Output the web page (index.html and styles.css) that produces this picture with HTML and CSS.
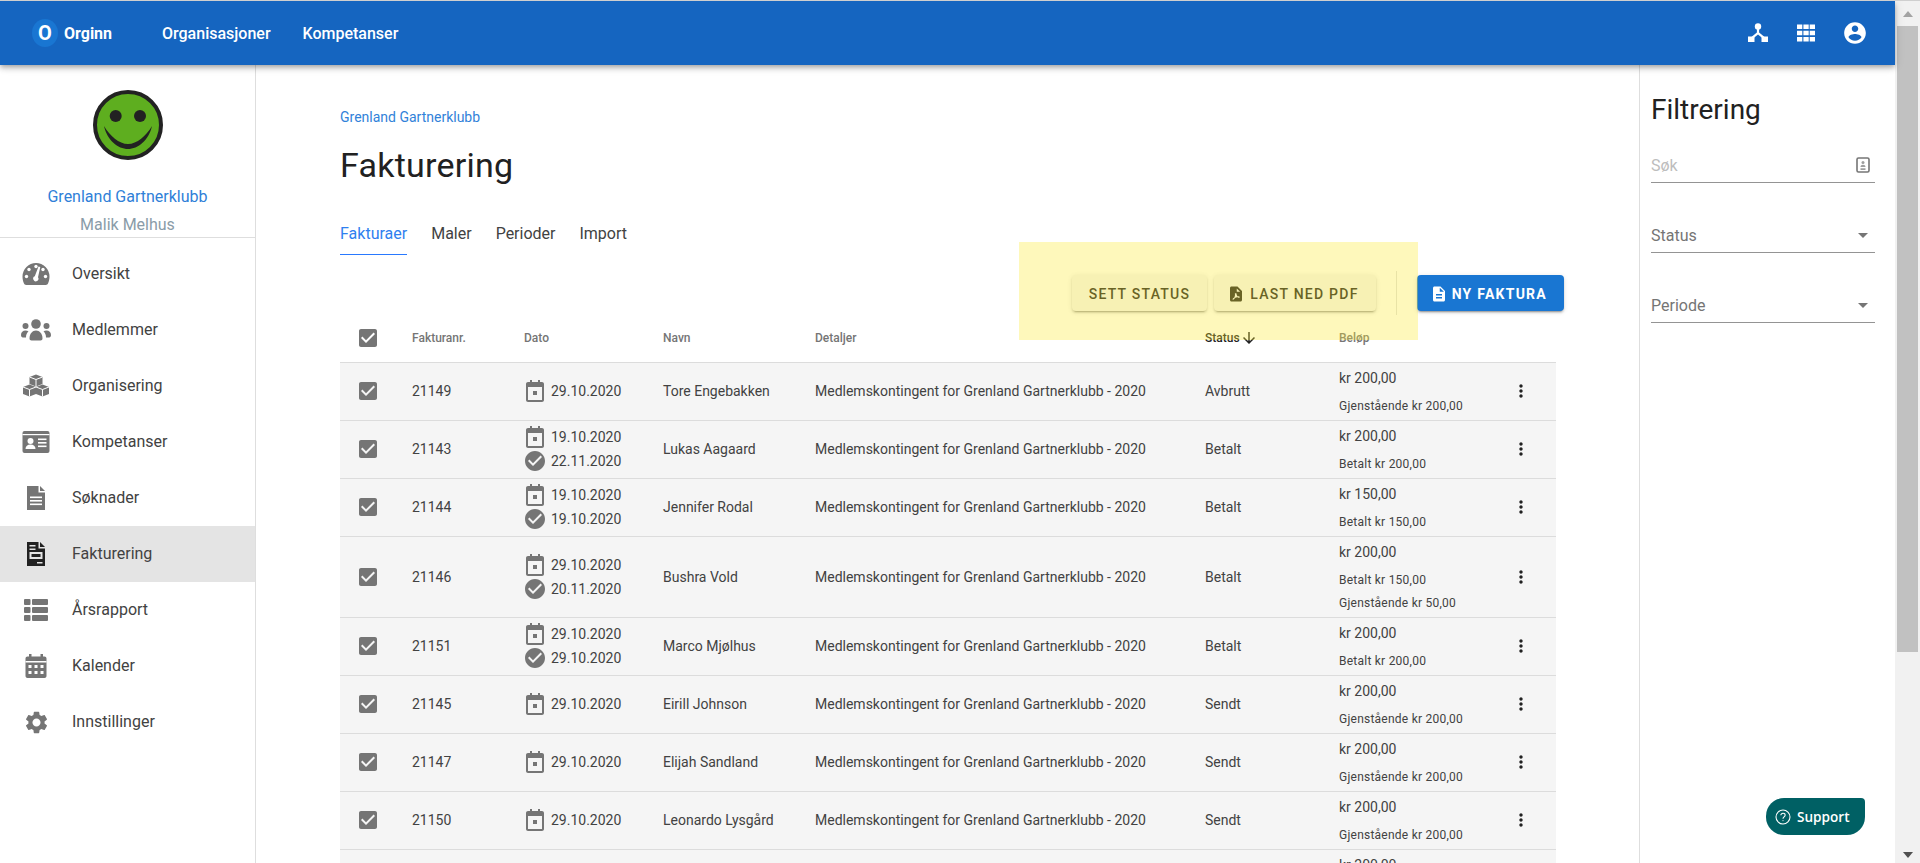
FILE: index.html
```html
<!DOCTYPE html>
<html lang="no">
<head>
<meta charset="utf-8">
<title>Fakturering</title>
<link rel="stylesheet" href="styles.css">
</head>
<body>
<svg class="sprite" aria-hidden="true">
  <symbol id="i-cal" viewBox="0 0 24 24"><path d="M7 1h2v2h6V1h2v2h2c1.100 0 2 .9 2 2v16c0 1.100-.9 2-2 2H5c-1.100 0-2-.9-2-2V5c0-1.100.9-2 2-2h2zM5 8v13h14V8zm5 4h4v4h-4z" fill-rule="evenodd"/></symbol>
  <symbol id="i-ok" viewBox="0 0 24 24"><path d="M12 2C6.480 2 2 6.480 2 12s4.480 10 10 10 10-4.480 10-10S17.520 2 12 2zm-2 15l-5-5 1.410-1.410L10 14.170l7.590-7.590L19 8l-9 9z"/></symbol>
  <symbol id="i-check" viewBox="0 0 24 24"><path d="M19 3H5c-1.110 0-2 .9-2 2v14c0 1.100.890 2 2 2h14c1.110 0 2-.9 2-2V5c0-1.100-.890-2-2-2zm-9 14l-5-5 1.410-1.410L10 14.170l7.590-7.590L19 8l-9 9z"/></symbol>
  <symbol id="i-more" viewBox="0 0 24 24"><path d="M12 8c1.100 0 2-.9 2-2s-.9-2-2-2-2 .9-2 2 .9 2 2 2zm0 2c-1.100 0-2 .9-2 2s.9 2 2 2 2-.9 2-2-.9-2-2-2zm0 6c-1.100 0-2 .9-2 2s.9 2 2 2 2-.9 2-2-.9-2-2-2z"/></symbol>
  <symbol id="i-drop" viewBox="0 0 24 24"><path d="M7 10l5 5 5-5z"/></symbol>
  <symbol id="i-doc" viewBox="0 0 24 24"><path d="M14 2H6c-1.100 0-1.990.9-1.990 2L4 20c0 1.100.890 2 1.990 2H18c1.100 0 2-.9 2-2V8l-6-6zm2 16H8v-2h8v2zm0-4H8v-2h8v2zm-3-5V3.500L18.500 9H13z"/></symbol>
  <symbol id="i-arrow" viewBox="0 0 24 24"><path d="M20 12l-1.410-1.410L13 16.170V4h-2v12.170l-5.580-5.590L4 12l8 8 8-8z"/></symbol>
</svg>

<div class="app">
  <div class="page">
    <header class="topbar">
      <div class="brand"><span class="brand-mark">O</span><span class="brand-name">Orginn</span></div>
      <nav class="topnav"><a>Organisasjoner</a><a>Kompetanser</a></nav>
      <div class="top-icons">
        <svg class="top-icon" viewBox="0 0 24 24"><circle cx="12" cy="5.500" r="3.200"/><path d="M10.900 8h2.200v3.600l5.200 4.200-1.400 1.700-4.900-3.900-4.900 3.900-1.400-1.700 5.200-4.200z"/><rect x="2" y="15.500" width="6.500" height="5.500"/><rect x="15.500" y="15.500" width="6.500" height="5.500"/></svg>
        <svg class="top-icon" viewBox="0 0 24 24"><path d="M3 3.500h5.300v4.600H3zm6.400 0h5.300v4.600H9.400zm6.300 0H21v4.600h-5.300zM3 9.700h5.300v4.600H3zm6.400 0h5.300v4.600H9.400zm6.300 0H21v4.600h-5.300zM3 15.900h5.300v4.600H3zm6.400 0h5.300v4.600H9.400zm6.300 0H21v4.600h-5.300z"/></svg>
        <svg class="top-icon top-icon-lg" viewBox="0 0 24 24"><path d="M12 2C6.480 2 2 6.480 2 12s4.480 10 10 10 10-4.480 10-10S17.520 2 12 2zm0 3c1.660 0 3 1.340 3 3s-1.340 3-3 3-3-1.340-3-3 1.340-3 3-3zm0 14.200c-2.500 0-4.710-1.280-6-3.220.03-1.990 4-3.080 6-3.080 1.990 0 5.970 1.090 6 3.080-1.290 1.940-3.500 3.220-6 3.220z"/></svg>
      </div>
    </header>

    <div class="body">
      <aside class="sidebar">
        <div class="profile">
          <svg class="avatar" viewBox="0 0 70 70">
            <circle class="av-face" cx="35" cy="35" r="33"/>
            <circle class="av-ink" cx="22.700" cy="26" r="6"/>
            <circle class="av-ink" cx="47" cy="26" r="6"/>
            <path class="av-ink" d="M11 36C14 50 25 59 35 59s21-9 24-23c-6 10-15 18-24 18s-18-8-24-18z"/>
          </svg>
          <div class="org-name">Grenland Gartnerklubb</div>
          <div class="user-name">Malik Melhus</div>
        </div>
        <nav class="menu">
          <a class="menu-item">
            <svg class="m-icon" viewBox="0 0 32 32"><path d="M16 5A13.500 13.500 0 0 0 2.500 18.500c0 2.500.5 4.800 1.400 6.800.4.9 1.200 1.700 2.300 1.700h19.600c1.100 0 1.900-.8 2.300-1.700.9-2 1.400-4.300 1.400-6.800A13.500 13.500 0 0 0 16 5z"/><g class="m-cut"><circle cx="16" cy="8.500" r="1.700"/><circle cx="9" cy="11.500" r="1.700"/><circle cx="23" cy="11.500" r="1.700"/><circle cx="6.500" cy="18.500" r="1.700"/><circle cx="25.500" cy="18.500" r="1.700"/><path d="M18.500 8.500l1.800.6-2.300 10.200a2.600 2.600 0 1 1-3.200-1z"/></g></svg>
            <span>Oversikt</span>
          </a>
          <a class="menu-item">
            <svg class="m-icon" viewBox="0 0 32 32"><circle cx="16" cy="10" r="4.800"/><path d="M9.500 24.500c0-5 3-8 6.500-8s6.500 3 6.500 8c0 1-.8 2-2 2h-9c-1.200 0-2-1-2-2z"/><circle cx="5.500" cy="12" r="3"/><circle cx="26.500" cy="12" r="3"/><path d="M1 21c0-3 2-4.500 4.500-4.500 1.200 0 2.200.3 3 1-1.600 1.300-2.500 3.300-2.500 6H2.800C1.700 23.500 1 22.500 1 21z"/><path d="M31 21c0-3-2-4.500-4.500-4.500-1.200 0-2.200.3-3 1 1.600 1.300 2.500 3.300 2.500 6h3.200c1.100 0 1.800-1 1.800-2.500z"/></svg>
            <span>Medlemmer</span>
          </a>
          <a class="menu-item">
            <svg class="m-icon" viewBox="0 0 32 32"><g class="m-cube"><path d="M16 4.500l6.500 2.500v7l-6.500 2.500L9.500 14V7z"/><path class="m-line" d="M9.500 7l6.500 2.500L22.500 7M16 9.500v7"/></g><g class="m-cube"><path d="M9.500 14.500l6.500 2.500v7l-6.500 2.500L3 24v-7z"/><path class="m-line" d="M3 17l6.500 2.500L16 17M9.500 19.500v7"/></g><g class="m-cube"><path d="M22.500 14.500l6.500 2.500v7l-6.500 2.500L16 24v-7z"/><path class="m-line" d="M16 17l6.500 2.500L29 17M22.500 19.500v7"/></g></svg>
            <span>Organisering</span>
          </a>
          <a class="menu-item">
            <svg class="m-icon" viewBox="0 0 32 32"><rect x="2.500" y="5" width="27" height="22" rx="2"/><g class="m-cut"><rect x="2.500" y="8" width="27" height="1.200"/><circle cx="10.500" cy="15" r="3"/><path d="M5.500 23c0-3 2-4.500 5-4.500s5 1.500 5 4.500z"/><rect x="18" y="12.500" width="8.500" height="1.600"/><rect x="18" y="16" width="8.500" height="1.600"/><rect x="18" y="19.500" width="8.500" height="1.600"/></g></svg>
            <span>Kompetanser</span>
          </a>
          <a class="menu-item">
            <svg class="m-icon" viewBox="0 0 32 32"><path d="M7 4h11.500v6.500H25V28H7z"/><path d="M20 4l5 5h-5z"/><g class="m-cut"><rect x="10" y="14.500" width="12" height="1.600"/><rect x="10" y="18" width="12" height="1.600"/><rect x="10" y="21.500" width="12" height="1.600"/></g></svg>
            <span>Søknader</span>
          </a>
          <a class="menu-item is-active">
            <svg class="m-icon" viewBox="0 0 32 32"><path d="M7 4h11.500v6.500H25V28H7z"/><path d="M20 4l5 5h-5z"/><g class="m-cut"><rect x="9.500" y="7" width="6" height="1.500"/><rect x="9.500" y="10.500" width="6" height="1.500"/><path fill-rule="evenodd" d="M9.500 14h13v7h-13zm2 2v3h9v-3z"/><rect x="17" y="24" width="5.500" height="1.500"/></g></svg>
            <span>Fakturering</span>
          </a>
          <a class="menu-item">
            <svg class="m-icon" viewBox="0 0 32 32"><rect x="4" y="5" width="6.500" height="6" rx="1"/><rect x="12" y="5" width="16" height="6" rx="1"/><rect x="4" y="13" width="6.500" height="6" rx="1"/><rect x="12" y="13" width="16" height="6" rx="1"/><rect x="4" y="21" width="6.500" height="6" rx="1"/><rect x="12" y="21" width="16" height="6" rx="1"/></svg>
            <span>Årsrapport</span>
          </a>
          <a class="menu-item">
            <svg class="m-icon" viewBox="0 0 32 32"><path d="M9 4h2.500v2.500h9V4H23v2.500h1.500c1.100 0 2 .9 2 2V26c0 1.100-.9 2-2 2h-17c-1.100 0-2-.9-2-2V8.500c0-1.100.9-2 2-2H9z"/><g class="m-cut"><rect x="5.500" y="11" width="21" height="1.500"/><rect x="8.500" y="15" width="3" height="3"/><rect x="14.500" y="15" width="3" height="3"/><rect x="20.500" y="15" width="3" height="3"/><rect x="8.500" y="21" width="3" height="3"/><rect x="14.500" y="21" width="3" height="3"/><rect x="20.500" y="21" width="3" height="3"/></g></svg>
            <span>Kalender</span>
          </a>
          <a class="menu-item">
            <svg class="m-icon m-icon-gear" viewBox="0 0 24 24"><path d="M19.140 12.940c.04-.3.06-.61.06-.94 0-.32-.02-.64-.07-.94l2.030-1.580c.18-.14.23-.41.12-.61l-1.920-3.320c-.12-.22-.37-.29-.59-.22l-2.390.96c-.5-.38-1.030-.7-1.620-.94l-.36-2.540c-.04-.24-.24-.41-.48-.41h-3.840c-.24 0-.43.17-.47.41l-.36 2.540c-.59.24-1.130.57-1.620.94l-2.390-.96c-.22-.08-.47 0-.59.22L2.740 8.870c-.12.21-.08.47.12.61l2.030 1.580c-.05.3-.09.63-.09.94s.02.64.07.94l-2.030 1.580c-.18.14-.23.41-.12.61l1.920 3.320c.12.22.37.29.59.22l2.390-.96c.5.38 1.030.7 1.620.94l.36 2.540c.05.24.24.41.48.41h3.840c.24 0 .44-.17.47-.41l.36-2.540c.59-.24 1.130-.56 1.620-.94l2.390.96c.22.08.47 0 .59-.22l1.920-3.320c.12-.22.07-.47-.12-.61l-2.010-1.580zM12 15.600c-1.980 0-3.600-1.620-3.600-3.600s1.620-3.600 3.600-3.600 3.600 1.620 3.600 3.600-1.620 3.600-3.600 3.600z"/></svg>
            <span>Innstillinger</span>
          </a>
        </nav>
      </aside>

      <main class="content">
        <a class="crumb">Grenland Gartnerklubb</a>
        <h1 class="title">Fakturering</h1>
        <div class="tabs"><a class="tab is-active">Fakturaer</a><a class="tab">Maler</a><a class="tab">Perioder</a><a class="tab">Import</a></div>

        <div class="toolbar">
          <button class="btn">SETT STATUS</button>
          <button class="btn btn-pdf"><svg class="btn-icon" viewBox="0 0 24 24"><path fill-rule="evenodd" d="M14 2H6c-1.100 0-2 .9-2 2v16c0 1.100.9 2 2 2h12c1.100 0 2-.9 2-2V8zm-1 2.500L17.500 9H13zM11 11h1.500c.2 1.500.7 3 2 4.200 1-.2 2.500-.1 2.500 1 0 1.200-1.800 1.100-3 .2-1.200.2-2.500.5-3.500 1-.8 1.500-2 2.600-3 2-.8-.7.5-2 2.300-2.900.7-1.300 1-3 .7-5.500z"/></svg>LAST NED PDF</button>
          <span class="tool-sep"></span>
          <button class="btn btn-primary"><svg class="btn-icon"><use href="#i-doc"/></svg>NY FAKTURA</button>
        </div>

        <div class="table">
          <div class="tr thead">
            <svg class="ck"><use href="#i-check"/></svg>
            <span>Fakturanr.</span><span>Dato</span><span>Navn</span><span>Detaljer</span>
            <span class="sorted">Status<svg class="sort"><use href="#i-arrow"/></svg></span><span>Beløp</span><span></span>
          </div>

          <div class="tr">
            <svg class="ck"><use href="#i-check"/></svg><span>21149</span>
            <div class="dates"><div class="date"><svg><use href="#i-cal"/></svg>29.10.2020</div></div>
            <span>Tore Engebakken</span><span>Medlemskontingent for Grenland Gartnerklubb - 2020</span><span>Avbrutt</span>
            <div class="amount"><div>kr 200,00</div><small>Gjenstående kr 200,00</small></div>
            <svg class="more"><use href="#i-more"/></svg>
          </div>
          <div class="tr">
            <svg class="ck"><use href="#i-check"/></svg><span>21143</span>
            <div class="dates"><div class="date"><svg><use href="#i-cal"/></svg>19.10.2020</div><div class="date"><svg><use href="#i-ok"/></svg>22.11.2020</div></div>
            <span>Lukas Aagaard</span><span>Medlemskontingent for Grenland Gartnerklubb - 2020</span><span>Betalt</span>
            <div class="amount"><div>kr 200,00</div><small>Betalt kr 200,00</small></div>
            <svg class="more"><use href="#i-more"/></svg>
          </div>
          <div class="tr">
            <svg class="ck"><use href="#i-check"/></svg><span>21144</span>
            <div class="dates"><div class="date"><svg><use href="#i-cal"/></svg>19.10.2020</div><div class="date"><svg><use href="#i-ok"/></svg>19.10.2020</div></div>
            <span>Jennifer Rodal</span><span>Medlemskontingent for Grenland Gartnerklubb - 2020</span><span>Betalt</span>
            <div class="amount"><div>kr 150,00</div><small>Betalt kr 150,00</small></div>
            <svg class="more"><use href="#i-more"/></svg>
          </div>
          <div class="tr">
            <svg class="ck"><use href="#i-check"/></svg><span>21146</span>
            <div class="dates"><div class="date"><svg><use href="#i-cal"/></svg>29.10.2020</div><div class="date"><svg><use href="#i-ok"/></svg>20.11.2020</div></div>
            <span>Bushra Vold</span><span>Medlemskontingent for Grenland Gartnerklubb - 2020</span><span>Betalt</span>
            <div class="amount"><div>kr 200,00</div><small>Betalt kr 150,00</small><small>Gjenstående kr 50,00</small></div>
            <svg class="more"><use href="#i-more"/></svg>
          </div>
          <div class="tr">
            <svg class="ck"><use href="#i-check"/></svg><span>21151</span>
            <div class="dates"><div class="date"><svg><use href="#i-cal"/></svg>29.10.2020</div><div class="date"><svg><use href="#i-ok"/></svg>29.10.2020</div></div>
            <span>Marco Mjølhus</span><span>Medlemskontingent for Grenland Gartnerklubb - 2020</span><span>Betalt</span>
            <div class="amount"><div>kr 200,00</div><small>Betalt kr 200,00</small></div>
            <svg class="more"><use href="#i-more"/></svg>
          </div>
          <div class="tr">
            <svg class="ck"><use href="#i-check"/></svg><span>21145</span>
            <div class="dates"><div class="date"><svg><use href="#i-cal"/></svg>29.10.2020</div></div>
            <span>Eirill Johnson</span><span>Medlemskontingent for Grenland Gartnerklubb - 2020</span><span>Sendt</span>
            <div class="amount"><div>kr 200,00</div><small>Gjenstående kr 200,00</small></div>
            <svg class="more"><use href="#i-more"/></svg>
          </div>
          <div class="tr">
            <svg class="ck"><use href="#i-check"/></svg><span>21147</span>
            <div class="dates"><div class="date"><svg><use href="#i-cal"/></svg>29.10.2020</div></div>
            <span>Elijah Sandland</span><span>Medlemskontingent for Grenland Gartnerklubb - 2020</span><span>Sendt</span>
            <div class="amount"><div>kr 200,00</div><small>Gjenstående kr 200,00</small></div>
            <svg class="more"><use href="#i-more"/></svg>
          </div>
          <div class="tr">
            <svg class="ck"><use href="#i-check"/></svg><span>21150</span>
            <div class="dates"><div class="date"><svg><use href="#i-cal"/></svg>29.10.2020</div></div>
            <span>Leonardo Lysgård</span><span>Medlemskontingent for Grenland Gartnerklubb - 2020</span><span>Sendt</span>
            <div class="amount"><div>kr 200,00</div><small>Gjenstående kr 200,00</small></div>
            <svg class="more"><use href="#i-more"/></svg>
          </div>
          <div class="tr tr-cut">
            <span></span><span></span><span></span><span></span><span></span><span></span>
            <div class="amount"><div>kr 200,00</div></div>
            <span></span>
          </div>
        </div>
      </main>

      <aside class="filters">
        <h2 class="filters-title">Filtrering</h2>
        <div class="field field-search"><span>Søk</span>
          <svg class="field-badge" viewBox="0 0 14 16"><rect x="1" y="1" width="12" height="14" rx="1.500"/><circle cx="7" cy="5.500" r="1.500"/><path d="M4.500 10c0-1.500 1-2.200 2.500-2.200s2.500.7 2.500 2.200zM4.500 11.300h5v1.700h-5z"/></svg>
        </div>
        <div class="field"><span>Status</span><svg class="field-drop"><use href="#i-drop"/></svg></div>
        <div class="field"><span>Periode</span><svg class="field-drop"><use href="#i-drop"/></svg></div>
      </aside>
    </div>
  </div>

  <div class="scrollbar">
    <span class="sb-up"></span>
    <span class="sb-thumb"></span>
    <span class="sb-down"></span>
  </div>

  <div class="highlight"></div>

  <button class="support">
    <svg class="support-icon" viewBox="0 0 24 24"><circle cx="12" cy="12" r="10.500"/><path d="M8.800 9.500c0-1.900 1.400-3.100 3.200-3.100s3.200 1.100 3.200 2.800c0 2.500-3.200 2.600-3.200 5.300"/><circle class="dot" cx="12" cy="17.400" r=".8"/></svg>
    Support
  </button>
</div>
</body>
</html>
```
FILE: styles.css
```css
* { box-sizing: border-box; }

html, body {
  margin: 0;
  height: 100%;
  overflow: hidden;
}

body {
  font-family: Roboto, "Liberation Sans", sans-serif;
  color: #212121;
  background: #fff;
}

.sprite { display: none; }

.app {
  position: relative;
  display: flex;
  height: 863px;
  overflow: hidden;
  border-top: 1px solid #cfcfcf;
}

.page {
  flex: 1;
  min-width: 0;
  display: flex;
  flex-direction: column;
}

/* Top bar */
.topbar {
  position: relative;
  z-index: 2;
  flex: none;
  height: 64px;
  display: flex;
  align-items: center;
  background: #1565c0;
  color: #fff;
  box-shadow: 0 2px 4px -1px rgba(0,0,0,.2), 0 4px 5px 0 rgba(0,0,0,.14), 0 1px 10px 0 rgba(0,0,0,.12);
}

.brand {
  display: flex;
  align-items: center;
  margin-left: 32px;
  width: 130px;
}

.brand-mark {
  width: 26px;
  height: 28px;
  border-radius: 50%;
  background: #1976d2;
  display: flex;
  align-items: center;
  justify-content: center;
  font-size: 20px;
  font-weight: 700;
}

.brand-name {
  margin-left: 6px;
  font-size: 16px;
  font-weight: 700;
}

.topnav {
  display: flex;
  gap: 32px;
  font-size: 16px;
  font-weight: 500;
}

.top-icons {
  margin-left: auto;
  margin-right: 27px;
  display: flex;
  align-items: center;
  gap: 24px;
}

.top-icon {
  width: 24px;
  height: 24px;
  fill: #fff;
}

.top-icon-lg { width: 26px; height: 26px; }

/* Body */
.body {
  flex: 1;
  min-height: 0;
  display: flex;
}

/* Sidebar */
.sidebar {
  flex: none;
  width: 256px;
  border-right: 1px solid #dedede;
}

.profile {
  padding: 25px 0 0;
  border-bottom: 1px solid #dedede;
  display: flex;
  flex-direction: column;
  align-items: center;
  text-align: center;
}

.avatar { width: 70px; height: 70px; display: block; }
.av-face { fill: #5eae1f; stroke: #222; stroke-width: 4; }
.av-ink { fill: #222; }

.org-name {
  margin-top: 25px;
  font-size: 16px;
  line-height: 24px;
  color: #2f80d8;
}

.user-name {
  margin-top: 4px;
  font-size: 16px;
  line-height: 24px;
  color: #8a9ca8;
}

.menu { padding-top: 8px; }

.menu-item {
  height: 56px;
  display: flex;
  align-items: center;
  font-size: 16px;
  color: #424242;
}

.menu-item span { margin-bottom: 2px; }

.menu-item.is-active { background: #e4e4e4; }

.m-icon {
  flex: none;
  width: 32px;
  height: 32px;
  margin: 0 20px;
  fill: #757575;
}

.m-icon-gear { width: 27px; height: 27px; margin: 0 22.5px; }
.m-cut { fill: #fff; }
.m-line { fill: none; stroke: #fff; stroke-width: 1; }
.is-active .m-icon { fill: #212121; }
.is-active .m-cut { fill: #e4e4e4; }

/* Main content */
.content {
  flex: 1;
  min-width: 0;
  padding: 42px 83px 0 84px;
}

.crumb {
  display: block;
  font-size: 14px;
  line-height: 20px;
  color: #3182d9;
}

.title {
  margin: 18px 0 0;
  font-size: 34px;
  line-height: 40px;
  font-weight: 400;
  letter-spacing: .25px;
  color: #212121;
}

.tabs {
  margin-top: 39px;
  display: flex;
  gap: 24px;
}

.tab {
  padding-bottom: 10px;
  font-size: 16px;
  line-height: 20px;
  color: #424242;
  border-bottom: 1px solid transparent;
}

.tab.is-active {
  color: #2f7fef;
  border-bottom-color: #2979ff;
}

.toolbar {
  margin: 20px -8px 3px 0;
  height: 36px;
  display: flex;
  justify-content: flex-end;
  align-items: center;
}

.btn {
  height: 36px;
  padding: 1px 17px 0;
  margin-left: 7px;
  border: 0;
  border-radius: 4px;
  display: flex;
  align-items: center;
  gap: 6px;
  background: #f5f5f5;
  color: #212121;
  font: 500 14px Roboto, sans-serif;
  letter-spacing: 1.25px;
  box-shadow: 0 3px 1px -2px rgba(0,0,0,.2), 0 2px 2px 0 rgba(0,0,0,.14), 0 1px 5px 0 rgba(0,0,0,.12);
}

.btn-pdf {
  padding-left: 15px;
  gap: 5px;
}

.btn-icon {
  width: 18px;
  height: 18px;
  fill: currentColor;
  margin-left: -2px;
}

.btn-primary {
  margin-left: 20px;
  padding-left: 15px;
  gap: 4px;
  background: #1976d2;
  color: #fff;
  font-weight: 700;
}

.tool-sep {
  width: 1px;
  height: 44px;
  margin-left: 20px;
  background: #e0e0e0;
}

/* Table */
.tr {
  display: grid;
  grid-template-columns: 72px 112px 139px 152px 390px 134px 170px 24px;
  align-items: center;
  padding-bottom: 1px;
  background: #f5f5f5;
  border-bottom: 1px solid #dcdcdc;
  font-size: 14px;
  color: #424242;
}

.thead {
  height: 49px;
  padding-bottom: 0;
  background: #fff;
  font-size: 12px;
  font-weight: 500;
  color: #757575;
}

.sorted {
  display: flex;
  align-items: center;
  color: #212121;
}

.sort {
  width: 18px;
  height: 18px;
  fill: #212121;
}

.ck {
  width: 24px;
  height: 24px;
  margin-left: 16px;
  fill: #757575;
}

.dates {
  display: flex;
  flex-direction: column;
}

.date {
  height: 24px;
  display: flex;
  align-items: center;
  gap: 4px;
  margin-left: -1px;
  white-space: nowrap;
}

.date svg {
  width: 24px;
  height: 24px;
  fill: #757575;
}

.amount {
  padding: 5px 0 3px;
  line-height: 20px;
}

.amount small {
  display: block;
  font-size: 12px;
  line-height: 20px;
  letter-spacing: .24px;
  margin-top: 3px;
}

.amount div + small { margin-top: 8px; }

.more {
  justify-self: center;
  width: 20px;
  height: 20px;
  fill: #212121;
}

/* Filters */
.filters {
  flex: none;
  width: 256px;
  padding: 27px 20px 0 11px;
  border-left: 1px solid #dedede;
}

.filters-title {
  margin: 0 0 23px;
  font-size: 28px;
  line-height: 36px;
  font-weight: 400;
  color: #212121;
}

.field {
  height: 32px;
  margin-bottom: 38px;
  padding-bottom: 3px;
  display: flex;
  align-items: center;
  justify-content: space-between;
  border-bottom: 1px solid #949494;
  font-size: 16px;
  color: #757575;
}

.field-search { color: #bdbdbd; }

.field-badge {
  width: 14px;
  height: 16px;
  margin-right: 5px;
  fill: #9e9e9e;
}

.field-badge rect {
  fill: none;
  stroke: #757575;
  stroke-width: 1.6;
}

.field-drop {
  width: 24px;
  height: 24px;
  fill: #757575;
}

/* Scrollbar */
.scrollbar {
  flex: none;
  width: 25px;
  padding: 0 2px;
  display: flex;
  flex-direction: column;
  background: #f1f1f1;
}

.sb-up {
  align-self: center;
  margin-top: 10px;
  border: 5.5px solid transparent;
  border-top: 0;
  border-bottom: 6px solid #a3a3a3;
}

.sb-thumb {
  margin-top: 9px;
  height: 626px;
  background: #c1c1c1;
}

.sb-down {
  align-self: center;
  margin-top: auto;
  margin-bottom: 5px;
  border: 5.5px solid transparent;
  border-bottom: 0;
  border-top: 6px solid #505050;
}

/* Overlays */
.highlight {
  position: absolute;
  left: 1019px;
  top: 241px;
  width: 399px;
  height: 98px;
  background: rgba(253, 234, 50, .33);
  pointer-events: none;
}

.support {
  position: absolute;
  left: 1766px;
  top: 797px;
  width: 99px;
  height: 37px;
  padding: 0 0 0 9px;
  border: 0;
  border-radius: 18px 4px 18px 18px;
  display: flex;
  align-items: center;
  gap: 6px;
  background: #006064;
  color: #fff;
  font: 600 13.6px "Open Sans", sans-serif;
}

.support-icon {
  width: 16px;
  height: 16px;
  fill: none;
  stroke: #fff;
  stroke-width: 1.6;
}

.support-icon .dot { fill: #fff; stroke: none; }
```
